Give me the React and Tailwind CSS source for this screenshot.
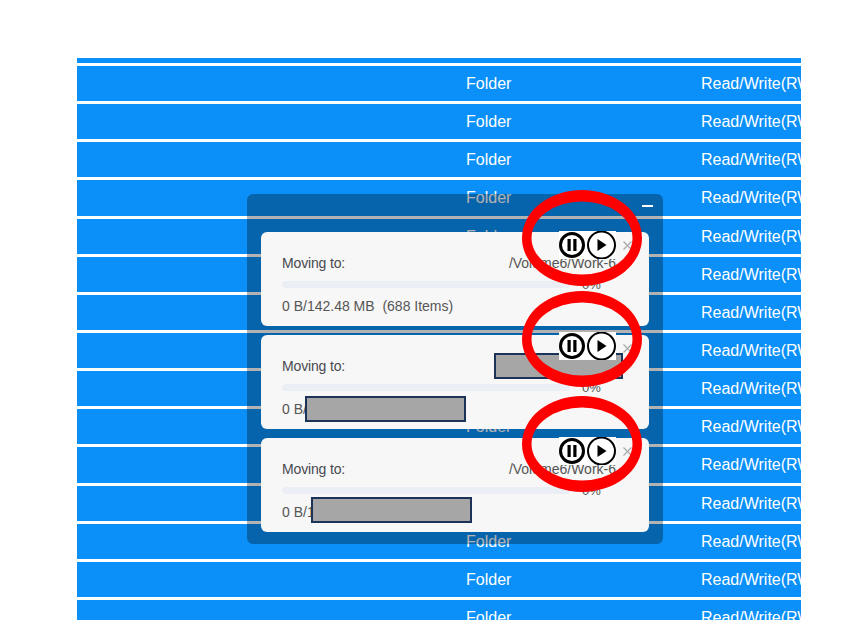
const rows = Array.from({ length: 15 });

function Row() {
  return (
    <div className="flex h-[38.15px] shrink-0 items-center border-b-[3px] border-white bg-[#0a90f8] pt-[1px] text-base whitespace-nowrap text-white">
      <div className="w-[389px] shrink-0" />
      <div className="w-[235px] shrink-0">Folder</div>
      <div>Read/Write(RW)</div>
    </div>
  );
}

function Controls({ className }) {
  return (
    <svg width="57" height="28" viewBox="0 0 57 28" className={className}>
      <rect width="57" height="28" fill="#fff" />
      <circle cx="13" cy="14" r="11.5" fill="#fff" stroke="#000" strokeWidth="3" />
      <rect x="8.5" y="8" width="3.2" height="12" fill="#000" />
      <rect x="14.3" y="8" width="3.2" height="12" fill="#000" />
      <circle cx="42.5" cy="14" r="13.5" fill="#fff" stroke="#000" strokeWidth="2" />
      <path d="M38.5 8l9 6-9 6z" fill="#000" />
    </svg>
  );
}

function Redact({ className }) {
  return <div className={`absolute border-2 border-[#1b3358] bg-[#a6a6a6] ${className}`} />;
}

function Card({ size, path, children }) {
  return (
    <div className="relative h-[94px] rounded-md bg-[#f7f7f7] px-[21px] pt-[22px] text-[14px] text-[#555]">
      <div className="flex h-[18px] items-center justify-between pr-[12px]">
        <span className="tracking-[-0.15px] text-[#48494f]">Moving to:</span>
        <span>{path}</span>
      </div>
      <div className="mt-[9px] flex h-[7px] items-center">
        <div className="h-[7px] w-[288px] rounded-full bg-[#ebeef5]" />
        <span className="ml-[12px] mt-[1px] text-[13px]">0%</span>
      </div>
      <div className="mt-[8px] whitespace-pre text-[14px]">{size}</div>
      <svg width="9" height="9" viewBox="0 0 9 9" className="absolute top-[9px] right-[17px]">
        <path d="M.5.5l8 8M8.5.5l-8 8" stroke="#a8a8a8" strokeWidth="1.1" fill="none" />
      </svg>
      {children}
    </div>
  );
}

function Ring({ cy }) {
  const ell = (rx, ry) => `M${582 - rx} ${cy}a${rx} ${ry} 0 1 0 ${2 * rx} 0a${rx} ${ry} 0 1 0 ${-2 * rx} 0z`;
  return <path d={`${ell(60, 48)}${ell(50.5, 36.5)}`} fill="#ff0000" fillRule="evenodd" />;
}

export default function App() {
  return (
    <div className="relative h-[639px] w-[853px] overflow-hidden bg-white font-['Liberation_Sans',Arial,sans-serif]">
      <div className="pt-[58px] pl-[77px]">
        <div className="flex h-[562px] w-[724px] flex-col overflow-hidden">
          <div className="h-[8px] shrink-0 border-b-[3px] border-white bg-[#0a90f8]" />
          {rows.map((_, i) => (
            <Row key={i} />
          ))}
        </div>
      </div>

      <div className="absolute top-[194px] left-[247px] h-[350px] w-[416px] rounded-md bg-black/30 px-[14px]">
        <div className="flex h-[38px] items-start justify-end pt-[11px]">
          <div className="mr-[-4px] h-[2px] w-[11px] bg-white" />
        </div>
        <div className="flex flex-col gap-[9px]">
          <Card size="0 B/142.48 MB  (688 Items)" path="/Volume6/Work-6" />
          <Card size="0 B/" path="">
            <Redact className="top-[18px] left-[233px] h-[26px] w-[129px]" />
            <Redact className="top-[61px] left-[44px] h-[26px] w-[161px]" />
          </Card>
          <Card size="0 B/1" path="/Volume6/Work-6">
            <Redact className="top-[59px] left-[50px] h-[26px] w-[161px]" />
          </Card>
        </div>
      </div>

      <Controls className="absolute top-[231px] left-[559px]" />
      <Controls className="absolute top-[332px] left-[559px]" />
      <Controls className="absolute top-[437px] left-[559px]" />

      <svg width="853" height="639" viewBox="0 0 853 639" className="pointer-events-none absolute top-0 left-0">
        <Ring cy={238} />
        <Ring cy={339} />
        <Ring cy={444} />
      </svg>
    </div>
  );
}
